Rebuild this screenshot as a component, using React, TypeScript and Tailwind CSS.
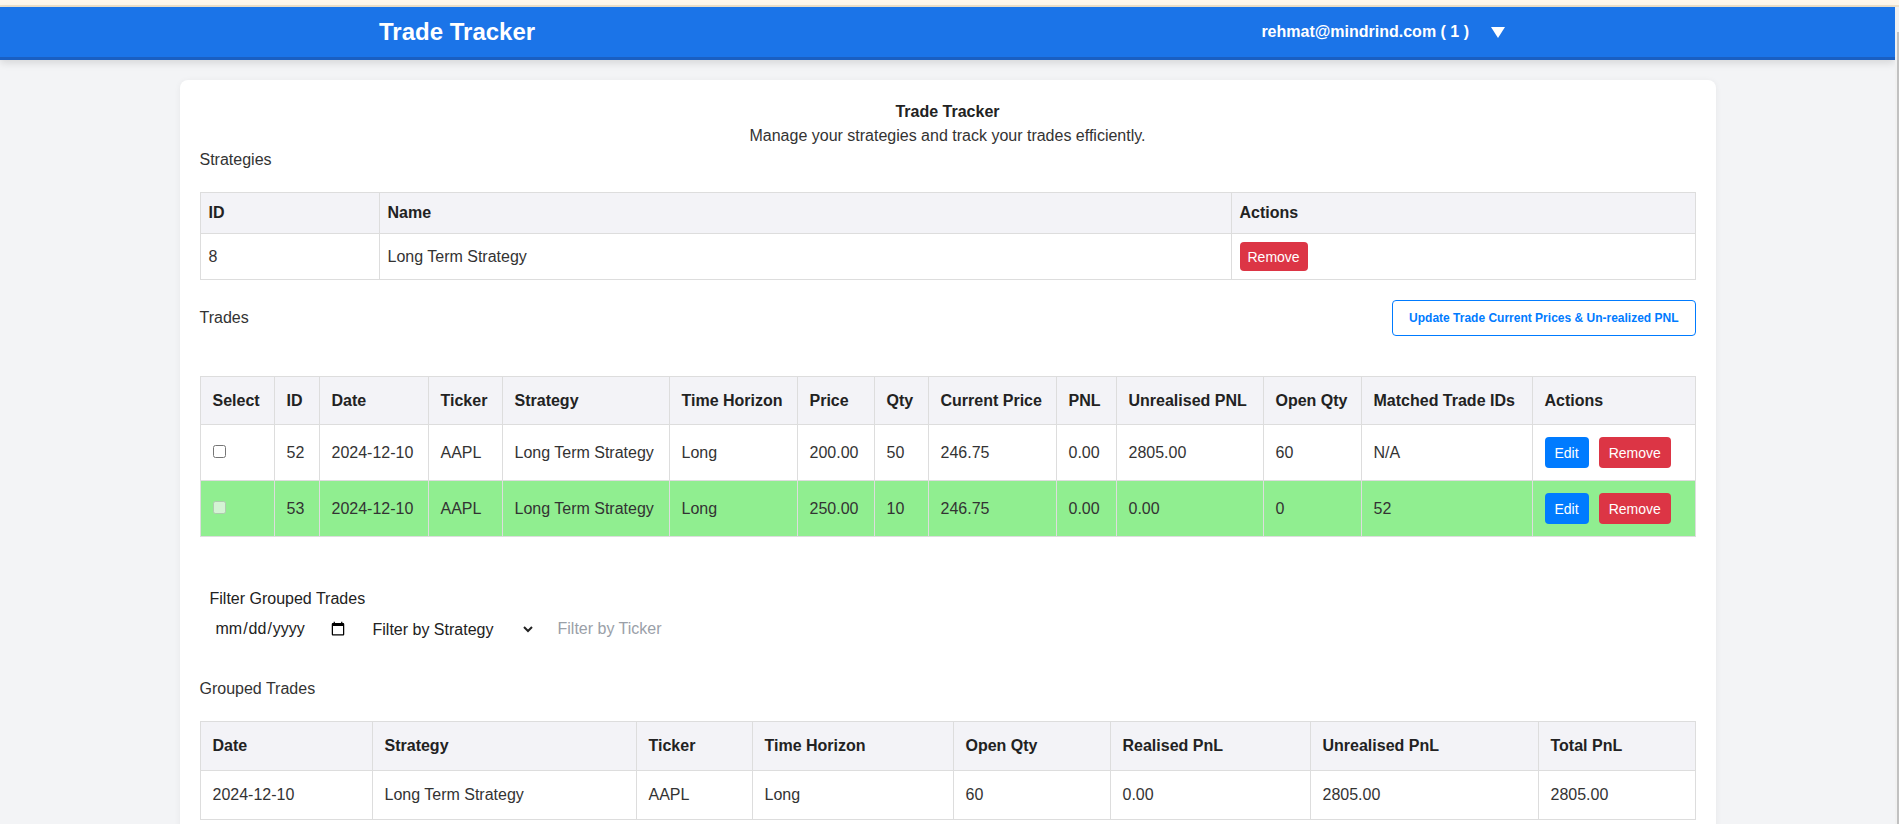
import React from "react";

type Trade = {
  id: number;
  date: string;
  ticker: string;
  strategy: string;
  horizon: string;
  price: string;
  qty: string;
  current: string;
  pnl: string;
  upnl: string;
  openQty: string;
  matched: string;
  closed: boolean;
};

const trades: Trade[] = [
  {
    id: 52,
    date: "2024-12-10",
    ticker: "AAPL",
    strategy: "Long Term Strategy",
    horizon: "Long",
    price: "200.00",
    qty: "50",
    current: "246.75",
    pnl: "0.00",
    upnl: "2805.00",
    openQty: "60",
    matched: "N/A",
    closed: false,
  },
  {
    id: 53,
    date: "2024-12-10",
    ticker: "AAPL",
    strategy: "Long Term Strategy",
    horizon: "Long",
    price: "250.00",
    qty: "10",
    current: "246.75",
    pnl: "0.00",
    upnl: "0.00",
    openQty: "0",
    matched: "52",
    closed: true,
  },
];

const th8 = "border border-[#dddddd] px-2 py-2 text-left font-bold text-[#222]";
const td8 = "border border-[#dddddd] px-2 py-2 text-left text-[#333]";
const th12 = "border border-[#dddddd] px-3 pt-3 pb-[11px] text-left font-bold text-[#222] whitespace-nowrap";
const gth12 = "border border-[#dddddd] px-3 py-3 text-left font-bold text-[#222] whitespace-nowrap";
const td12 = "border border-[#dddddd] px-3 py-3 text-left text-[#333] whitespace-nowrap";

export default function App() {
  return (
    <div
      className="h-[824px] overflow-hidden bg-[#f3f4f6] text-base leading-6 text-[#333]"
      style={{ fontFamily: '"Liberation Sans", Arial, sans-serif' }}
    >
      <div className="h-[5px] bg-[#fff7eb]" />
      <div className="h-[2px] bg-[#eee2cc]" />
      <div className="flex">
        <div className="flex-1 min-w-0">
          <header className="h-[53px] bg-[#1b74e8] border-b-[3px] border-[#1a5fc2] shadow-[0_3px_8px_rgba(0,0,0,0.12)] flex items-center">
            <div className="ml-[379px] text-[24px] font-bold text-white leading-none">Trade Tracker</div>
            <div className="ml-auto mr-[390px] flex items-center text-white font-bold text-[16px]">
              <span>rehmat@mindrind.com ( 1 )</span>
              <svg className="ml-[22px]" width="14" height="11" viewBox="0 0 14 11">
                <polygon points="0,0 14,0 7,11" fill="#ffffff" />
              </svg>
            </div>
          </header>

          <main className="pt-5">
            <div className="mx-auto w-[1536px] bg-white rounded-lg shadow-[0_1px_6px_rgba(0,0,0,0.06)] p-5">
              <div className="text-center font-bold text-[#222]">Trade Tracker</div>
              <div className="text-center text-[#333]">Manage your strategies and track your trades efficiently.</div>
              <div className="text-[#333]">Strategies</div>

              <table className="mt-5 w-full table-fixed border-collapse">
                <colgroup>
                  <col className="w-[179px]" />
                  <col className="w-[852px]" />
                  <col />
                </colgroup>
                <thead>
                  <tr className="bg-[#f3f3f7]">
                    <th className={th8}>ID</th>
                    <th className={th8}>Name</th>
                    <th className={th8}>Actions</th>
                  </tr>
                </thead>
                <tbody>
                  <tr>
                    <td className={td8}>8</td>
                    <td className={td8}>Long Term Strategy</td>
                    <td className={td8}>
                      <div className="flex">
                        <button className="h-[29px] px-2 rounded bg-[#dc3545] text-white text-[14px] leading-none flex items-center">
                          Remove
                        </button>
                      </div>
                    </td>
                  </tr>
                </tbody>
              </table>

              <div className="mt-5 flex items-center justify-between">
                <div className="text-[#333]">Trades</div>
                <button className="h-[36px] px-4 rounded border border-[#007bff] bg-white text-[#007bff] text-[12px] font-bold leading-none">
                  Update Trade Current Prices &amp; Un-realized PNL
                </button>
              </div>

              <table className="mt-10 w-full table-fixed border-collapse">
                <colgroup>
                  <col className="w-[74px]" />
                  <col className="w-[45px]" />
                  <col className="w-[109px]" />
                  <col className="w-[74px]" />
                  <col className="w-[167px]" />
                  <col className="w-[128px]" />
                  <col className="w-[77px]" />
                  <col className="w-[54px]" />
                  <col className="w-[128px]" />
                  <col className="w-[60px]" />
                  <col className="w-[147px]" />
                  <col className="w-[98px]" />
                  <col className="w-[171px]" />
                  <col />
                </colgroup>
                <thead>
                  <tr className="bg-[#f3f3f7]">
                    <th className={th12}>Select</th>
                    <th className={th12}>ID</th>
                    <th className={th12}>Date</th>
                    <th className={th12}>Ticker</th>
                    <th className={th12}>Strategy</th>
                    <th className={th12}>Time Horizon</th>
                    <th className={th12}>Price</th>
                    <th className={th12}>Qty</th>
                    <th className={th12}>Current Price</th>
                    <th className={th12}>PNL</th>
                    <th className={th12}>Unrealised PNL</th>
                    <th className={th12}>Open Qty</th>
                    <th className={th12}>Matched Trade IDs</th>
                    <th className={th12}>Actions</th>
                  </tr>
                </thead>
                <tbody>
                  {trades.map((t) => (
                    <tr key={t.id} className={t.closed ? "bg-[#90ee90]" : "bg-white"}>
                      <td className={td12}>
                        <input type="checkbox" disabled={t.closed} className="w-[13px] h-[13px] align-middle -mt-[3px]" />
                      </td>
                      <td className={td12}>{t.id}</td>
                      <td className={td12}>{t.date}</td>
                      <td className={td12}>{t.ticker}</td>
                      <td className={td12}>{t.strategy}</td>
                      <td className={td12}>{t.horizon}</td>
                      <td className={td12}>{t.price}</td>
                      <td className={td12}>{t.qty}</td>
                      <td className={td12}>{t.current}</td>
                      <td className={td12}>{t.pnl}</td>
                      <td className={td12}>{t.upnl}</td>
                      <td className={td12}>{t.openQty}</td>
                      <td className={td12}>{t.matched}</td>
                      <td className={td12}>
                        <div className="flex gap-[10px]">
                          <button className="h-[31px] px-[10px] rounded bg-[#007bff] text-white text-[14px] leading-none flex items-center">
                            Edit
                          </button>
                          <button className="h-[31px] px-[10px] rounded bg-[#dc3545] text-white text-[14px] leading-none flex items-center">
                            Remove
                          </button>
                        </div>
                      </td>
                    </tr>
                  ))}
                </tbody>
              </table>

              <div className="mt-[50px] pl-[10px]">
                <div className="text-[#222]">Filter Grouped Trades</div>
                <div className="mt-[3px] flex items-center h-[30px]">
                  <input
                    type="date"
                    className="w-[142px] h-[30px] pl-[5px] pr-[4px] bg-transparent text-[16px] text-[#222] outline-none"
                  />
                  <select className="ml-[17px] w-[167px] h-[30px] bg-transparent text-[16px] text-[#222] outline-none" defaultValue="">
                    <option value="">Filter by Strategy</option>
                    <option value="8">Long Term Strategy</option>
                  </select>
                  <input
                    type="text"
                    placeholder="Filter by Ticker"
                    className="ml-[22px] w-[180px] h-[30px] bg-transparent text-[16px] text-[#222] placeholder:text-[#9aa0a8] outline-none"
                  />
                </div>
              </div>

              <div className="mt-[33px] text-[#333]">Grouped Trades</div>

              <table className="mt-5 w-full table-fixed border-collapse">
                <colgroup>
                  <col className="w-[172px]" />
                  <col className="w-[264px]" />
                  <col className="w-[116px]" />
                  <col className="w-[201px]" />
                  <col className="w-[157px]" />
                  <col className="w-[200px]" />
                  <col className="w-[228px]" />
                  <col />
                </colgroup>
                <thead>
                  <tr className="bg-[#f3f3f7]">
                    <th className={gth12}>Date</th>
                    <th className={gth12}>Strategy</th>
                    <th className={gth12}>Ticker</th>
                    <th className={gth12}>Time Horizon</th>
                    <th className={gth12}>Open Qty</th>
                    <th className={gth12}>Realised PnL</th>
                    <th className={gth12}>Unrealised PnL</th>
                    <th className={gth12}>Total PnL</th>
                  </tr>
                </thead>
                <tbody>
                  <tr>
                    <td className={td12}>2024-12-10</td>
                    <td className={td12}>Long Term Strategy</td>
                    <td className={td12}>AAPL</td>
                    <td className={td12}>Long</td>
                    <td className={td12}>60</td>
                    <td className={td12}>0.00</td>
                    <td className={td12}>2805.00</td>
                    <td className={td12}>2805.00</td>
                  </tr>
                </tbody>
              </table>
            </div>
          </main>
        </div>
        <div className="w-[4px] bg-[#f1f1f1]">
          <div className="mt-[25px] ml-[2px] w-[2px] h-[800px] bg-[#c1c1c1]" />
        </div>
      </div>
    </div>
  );
}
